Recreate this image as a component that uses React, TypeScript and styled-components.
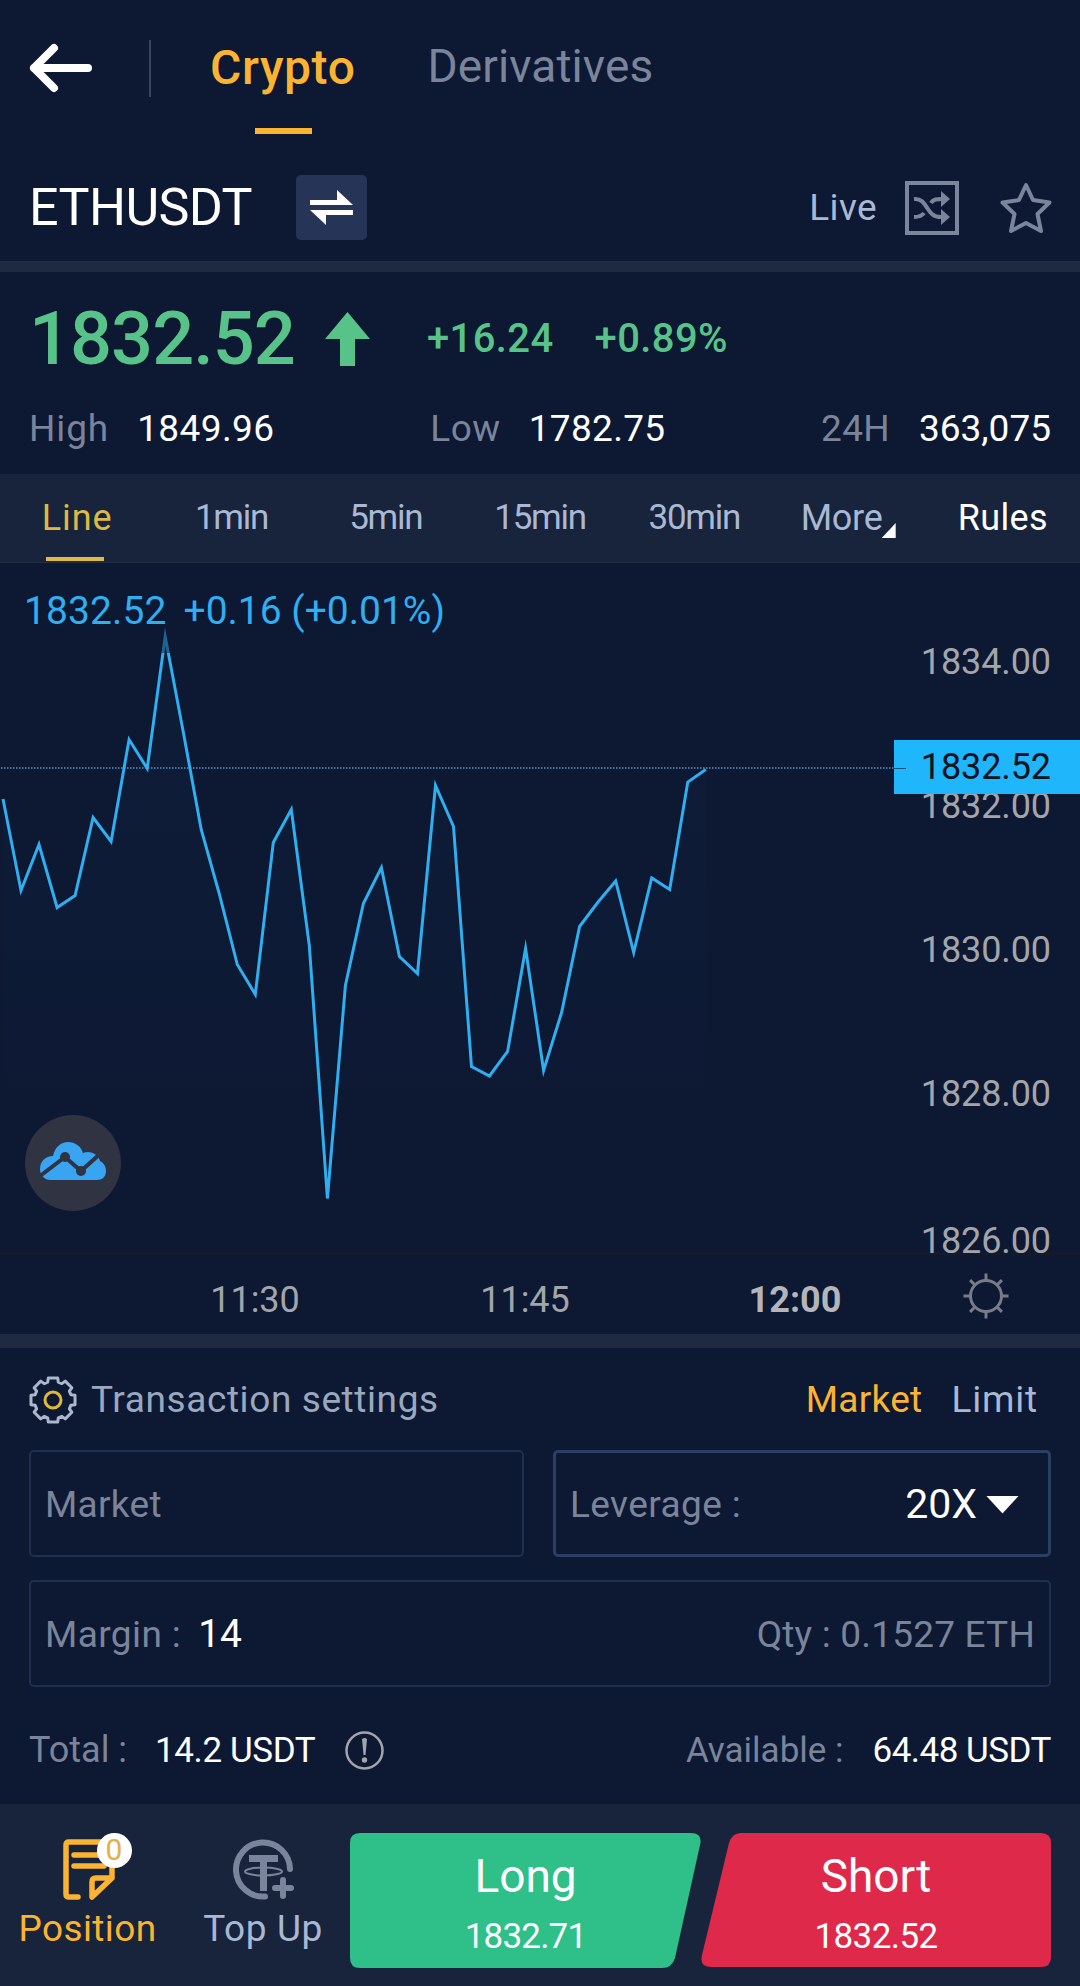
import React from "react";
import styled, { createGlobalStyle } from "styled-components";

const GlobalStyle = createGlobalStyle`
  * { box-sizing: border-box; }
  html, body { margin: 0; padding: 0; background: #0d1832; }
  body { font-family: Roboto, "Liberation Sans", sans-serif; }
`;

const Screen = styled.main`
  width: 1080px;
  height: 1986px;
  display: flex;
  flex-direction: column;
  overflow: hidden;
  background: #0d1832;
  color: #fff;
`;

const Label = styled.span<{ $size?: number; $color?: string; $weight?: number; $spacing?: number }>`
  font-size: ${(p) => p.$size ?? 37}px;
  line-height: 1;
  color: ${(p) => p.$color ?? "#fff"};
  font-weight: ${(p) => p.$weight ?? 400};
  letter-spacing: ${(p) => p.$spacing ?? 0}px;
  white-space: nowrap;
`;

const MUTED = "#7a849b";
const SOFT = "#a9b8d4";
const GOLD = "#fbb332";
const GREEN = "#58c388";

const Band = styled.div<{ $h: number }>`
  flex: none;
  height: ${(p) => p.$h}px;
  background: #1f2940;
`;

const TopNav = styled.header`
  flex: none;
  height: 136px;
  display: flex;
  align-items: center;
  padding-left: 29px;
`;

const NavDivider = styled.div`
  width: 2px;
  height: 57px;
  margin: 0 59px 0 57px;
  background: #3a445a;
`;

const NavTab = styled.div<{ $active?: boolean }>`
  height: 136px;
  position: relative;
  display: flex;
  align-items: center;
  justify-content: center;
  padding-bottom: ${(p) => (p.$active ? 0 : 5)}px;
  margin-right: 72px;
  &::after {
    content: "";
    display: ${(p) => (p.$active ? "block" : "none")};
    position: absolute;
    bottom: 2px;
    left: 50%;
    width: 57px;
    height: 6px;
    margin-left: -28px;
    background: ${GOLD};
  }
`;

const SymbolRow = styled.section`
  flex: none;
  height: 125px;
  padding: 18px 28px 0 29px;
  display: flex;
  align-items: center;
`;

const SwapButton = styled.button`
  width: 71px;
  height: 65px;
  margin-left: 44px;
  padding: 0;
  border: 0;
  border-radius: 5px;
  background: #263557;
  display: flex;
  align-items: center;
  justify-content: center;
`;

const SymbolActions = styled.div`
  margin-left: auto;
  display: flex;
  align-items: center;
`;

const ActionIcon = styled.svg<{ $ml: number }>`
  display: block;
  margin-left: ${(p) => p.$ml}px;
`;

const Quote = styled.section`
  flex: none;
  height: 202px;
`;

const PriceRow = styled.div`
  height: 132px;
  display: flex;
  align-items: center;
  padding: 2px 0 0 29px;
`;

const Change = styled(Label)<{ $ml: number }>`
  margin-left: ${(p) => p.$ml}px;
`;

const StatsRow = styled.div`
  height: 48px;
  padding: 0 29px;
  display: flex;
  align-items: center;
  justify-content: space-between;
`;

const Stat = styled.div<{ $gap: number }>`
  display: flex;
  align-items: center;
  gap: ${(p) => p.$gap}px;
`;

const Tabs = styled.nav`
  flex: none;
  height: 89px;
  display: grid;
  grid-template-columns: repeat(7, 1fr);
  background: #18233c;
  border-bottom: 1px solid #222d45;
`;

const Tab = styled.div<{ $active?: boolean; $marked?: boolean }>`
  position: relative;
  display: flex;
  align-items: center;
  justify-content: center;
  padding: 0 ${(p) => (p.$marked ? 14 : 0)}px 1px 0;
  &::after {
    content: "";
    display: ${(p) => (p.$active ? "block" : "none")};
    position: absolute;
    left: 46px;
    bottom: 1px;
    width: 58px;
    height: 4px;
    background: #dcbc45;
  }
`;

const MoreMark = styled.i`
  position: absolute;
  right: 30px;
  top: 49px;
  width: 14px;
  height: 15px;
  background: #fff;
  clip-path: polygon(100% 0, 100% 100%, 0 100%);
`;

const Chart = styled.section`
  flex: none;
  height: 692px;
  position: relative;
  display: grid;
  grid-template-columns: 894px 186px;
  border-bottom: 3px solid #131a2c;
`;

const Plot = styled.svg`
  display: block;
`;

const Legend = styled.div`
  position: absolute;
  left: 24px;
  top: 29px;
  display: flex;
  gap: 17px;
`;

const PriceAxis = styled.div`
  display: flex;
  flex-direction: column;
  align-items: flex-end;
  gap: 108px;
  padding: 81px 29px 0 0;
  & > :last-child {
    margin-top: 3px;
  }
`;

const PriceTag = styled.div`
  position: absolute;
  right: 0;
  top: 177px;
  width: 186px;
  height: 54px;
  padding-right: 29px;
  background: #1fb6fb;
  display: flex;
  align-items: center;
  justify-content: flex-end;
  &::before {
    content: "";
    position: absolute;
    left: 0;
    top: 28px;
    width: 12px;
    height: 1px;
    background: #0d4f78;
  }
`;

const CloudBadge = styled.div`
  position: absolute;
  left: 25px;
  top: 552px;
  width: 96px;
  height: 96px;
  border-radius: 50%;
  background: #2f3342;
`;

const TimeAxis = styled.div`
  flex: none;
  height: 79px;
  padding: 10px 0 0 120px;
  display: flex;
  align-items: flex-start;
`;

const TimeSlot = styled.div`
  width: 270px;
  height: 70px;
  display: flex;
  align-items: center;
  justify-content: center;
`;

const TimeIcon = styled.svg`
  margin: 6px 0 0 31px;
`;

const Order = styled.section`
  flex: none;
  height: 456px;
  padding: 0 29px;
`;

const OrderHead = styled.div`
  height: 102px;
  padding-top: 1px;
  display: flex;
  align-items: center;
`;

const OrderModes = styled.div`
  margin-left: auto;
  padding-right: 13px;
  display: flex;
  gap: 29px;
`;

const Fields = styled.div`
  display: grid;
  grid-template-columns: 495px 498px;
  gap: 23px 29px;
`;

const Field = styled.div<{ $strong?: boolean; $wide?: boolean }>`
  height: 107px;
  grid-column: ${(p) => (p.$wide ? "1 / -1" : "auto")};
  border: ${(p) => (p.$strong ? "3px solid #2a3f62" : "2px solid #1f2f50")};
  border-radius: 5px;
  padding: 2px ${(p) => (p.$strong ? 29 : 14)}px 0 14px;
  display: flex;
  align-items: center;
`;

const Push = styled.div`
  margin-left: auto;
  display: flex;
  align-items: center;
`;

const Caret = styled.i`
  width: 33px;
  height: 18px;
  margin-left: 9px;
  background: #fff;
  clip-path: polygon(0 0, 100% 0, 50% 100%);
`;

const Totals = styled.div`
  height: 117px;
  padding-top: 9px;
  display: flex;
  align-items: center;
`;

const BottomBar = styled.footer`
  flex: none;
  height: 182px;
  padding: 29px 29px 0 17px;
  display: flex;
  background: #18233c;
`;

const BarItem = styled.div<{ $w: number; $ml?: number }>`
  width: ${(p) => p.$w}px;
  margin-left: ${(p) => p.$ml ?? 0}px;
  height: 135px;
  display: flex;
  flex-direction: column;
  align-items: center;
  gap: 9px;
`;

const BarIcon = styled.div`
  position: relative;
  width: 64px;
  height: 68px;
`;

const Count = styled.span`
  position: absolute;
  left: 41px;
  top: 0;
  width: 35px;
  height: 35px;
  border-radius: 50%;
  background: #fff;
  color: #e3b04a;
  font-size: 30px;
  line-height: 34px;
  text-align: center;
`;

const TradeButtons = styled.div`
  margin-left: auto;
  display: grid;
  grid-template-columns: 351px 350px;
`;

const Trade = styled.button`
  position: relative;
  height: 135px;
  border: 0;
  padding: 20px 0 0;
  background: none;
  font-family: inherit;
  display: flex;
  flex-direction: column;
  align-items: center;
  gap: 20px;
`;

const TradeShape = styled.svg`
  position: absolute;
  inset: 0;
`;

const TradeText = styled(Label)`
  position: relative;
`;

const PRICES = [
  798.5, 890, 844, 907, 895, 817, 841, 739, 768, 636, 731, 829, 893, 964, 994, 842, 809, 945, 1198,
  985, 903, 867, 956, 973, 785, 826, 1066, 1075.5, 1051, 948, 1070, 1012, 926, 902, 880.5, 952,
  877.5, 889, 781.5, 769,
];
const STEP = 18.02;
const points = PRICES.map((y, i) => `${(3 + i * STEP).toFixed(1)},${y - 562.5}`).join(" ");

const gearPath = (() => {
  const out: string[] = [];
  for (let i = 0; i < 8; i++) {
    const c = (i * 45 - 90) * (Math.PI / 180);
    const pts: [number, number][] = [
      [-0.29, 18.6],
      [-0.21, 22.5],
      [0.21, 22.5],
      [0.29, 18.6],
    ];
    pts.forEach(([d, r]) => out.push(`${(24 + r * Math.cos(c + d)).toFixed(2)},${(24 + r * Math.sin(c + d)).toFixed(2)}`));
  }
  return `M${out.join("L")}Z`;
})();

export default function App() {
  return (
    <Screen>
      <GlobalStyle />
      <TopNav>
        <svg width="63" height="50" viewBox="0 0 63 50" fill="none" stroke="#fff" strokeWidth="8" strokeLinecap="round" strokeLinejoin="round">
          <path d="M25 5L5 25L25 45M5 25H59" />
        </svg>
        <NavDivider />
        <NavTab $active>
          <Label $size={48} $color={GOLD} $weight={500} $spacing={0.6}>Crypto</Label>
        </NavTab>
        <NavTab>
          <Label $size={46} $color={MUTED} $spacing={0.1}>Derivatives</Label>
        </NavTab>
      </TopNav>

      <SymbolRow>
        <Label $size={52} $spacing={-0.6}>ETHUSDT</Label>
        <SwapButton>
          <svg width="43" height="36" viewBox="0 0 43 36" fill="#fff">
            <path d="M0 10H27V0L43 15H0ZM43 20H0L16 35V25H43Z" />
          </svg>
        </SwapButton>
        <SymbolActions>
          <Label $color={SOFT} $spacing={0.4}>Live</Label>
          <ActionIcon $ml={28} width="54" height="54" viewBox="0 0 54 54" fill="none" stroke={MUTED}>
            <rect x="2" y="2" width="50" height="50" strokeWidth="4" />
            <path d="M9 18C24 17 20 37 37 36M9 36C14 36 17 35 19 32M26 22C28 18 32 18 37 18" strokeWidth="4" />
            <path d="M36 10L45 18L36 26ZM36 28L45 36L36 44Z" fill={MUTED} stroke="none" />
          </ActionIcon>
          <ActionIcon $ml={41} width="52" height="52" viewBox="0 0 52 52" fill="none" stroke={MUTED} strokeWidth="4" strokeLinejoin="round">
            <path d="M26 3L33 18L49.500 20.500L37.500 32L41 49L26 41L11 49L14.500 32L2.500 20.500L19 18Z" />
          </ActionIcon>
        </SymbolActions>
      </SymbolRow>
      <Band $h={11} />

      <Quote>
        <PriceRow>
          <Label $size={74} $color={GREEN} $weight={500} $spacing={-1}>1832.52</Label>
          <ActionIcon $ml={30} width="45" height="54" viewBox="0 0 45 54" fill={GREEN}>
            <path d="M22.500 0L45 27H30V54H15V27H0Z" />
          </ActionIcon>
          <Change $ml={57} $size={40} $color={GREEN} $weight={500} $spacing={0.4}>+16.24</Change>
          <Change $ml={41} $size={40} $color={GREEN} $weight={500} $spacing={0.4}>+0.89%</Change>
        </PriceRow>
        <StatsRow>
          <Stat $gap={28}><Label $color={MUTED} $spacing={0.9}>High</Label><Label $spacing={0.4}>1849.96</Label></Stat>
          <Stat $gap={28}><Label $color={MUTED} $spacing={0.6}>Low</Label><Label $spacing={0.3}>1782.75</Label></Stat>
          <Stat $gap={29}><Label $color={MUTED} $spacing={0.3}>24H</Label><Label>363,075</Label></Stat>
        </StatsRow>
      </Quote>

      <Tabs>
        <Tab $active><Label $size={36} $color="#dcb945" $spacing={0.9}>Line</Label></Tab>
        {["1min", "5min", "15min", "30min"].map((t) => (
          <Tab key={t}><Label $size={35} $color={SOFT} $spacing={-1.3}>{t}</Label></Tab>
        ))}
        <Tab $marked><Label $size={36} $color={SOFT} $spacing={-0.3}>More</Label><MoreMark /></Tab>
        <Tab><Label $size={36} $spacing={0.4}>Rules</Label></Tab>
      </Tabs>

      <Chart>
        <Plot width="894" height="690" viewBox="0 0 894 690">
          <defs>
            <linearGradient id="area" x1="0" y1="0" x2="0" y2="1">
              <stop offset="0" stopColor="#1fb6fb" stopOpacity="0.03" />
              <stop offset="1" stopColor="#1fb6fb" stopOpacity="0" />
            </linearGradient>
          </defs>
          <polygon points={`3,690 ${points} 706,690`} fill="url(#area)" />
          <line x1="1" y1="205" x2="894" y2="205" stroke="#4f93c8" strokeWidth="1.500" strokeDasharray="1.500 1.500" />
          <polyline points={points} fill="none" stroke="#2faef0" strokeWidth="3" strokeMiterlimit="10" />
          <rect x="158" y="62" width="14" height="28" fill="#0d1832" fillOpacity="0.5" />
        </Plot>
        <PriceAxis>
          {["1834.00", "1832.00", "1830.00", "1828.00", "1826.00"].map((p) => (
            <Label key={p} $size={36} $color="#a3a5ab" $spacing={-0.1}>{p}</Label>
          ))}
        </PriceAxis>
        <Legend>
          <Label $size={39} $color="#2faef0" $spacing={0.1}>1832.52</Label>
          <Label $size={39} $color="#2faef0">+0.16 (+0.01%)</Label>
        </Legend>
        <PriceTag><Label $size={36} $color="#0b1420" $spacing={-0.1}>1832.52</Label></PriceTag>
        <CloudBadge>
          <svg width="96" height="96" viewBox="0 0 96 96">
            <path d="M26 65C19 65 15 60 15 54C15 46 21 41 28 41C30 32 36 27 43 27C50 27 56 31 58 38C65 35 73 39 75 46C79 48 81 52 81 56C81 62 77 65 72 65Z" fill="#38a4f2" />
            <path d="M15 61L40 42L56 56L76 38" fill="none" stroke="#2f3342" strokeWidth="4" />
            <circle cx="40" cy="42" r="5" fill="#2f3342" />
            <circle cx="56" cy="56" r="5" fill="#2f3342" />
          </svg>
        </CloudBadge>
      </Chart>
      <TimeAxis>
        <TimeSlot><Label $size={36} $color="#a3a5ab">11:30</Label></TimeSlot>
        <TimeSlot><Label $size={36} $color="#a3a5ab">11:45</Label></TimeSlot>
        <TimeSlot><Label $size={36} $color="#b4b5ba" $weight={700}>12:00</Label></TimeSlot>
        <TimeIcon width="50" height="50" viewBox="-25 -25 50 50" fill="none" stroke="#777c88" strokeWidth="3">
          <circle r="15.500" />
          {[0, 45, 90, 135, 180, 225, 270, 315].map((a) => (
            <path key={a} d="M0 -16V-22.500" transform={`rotate(${a})`} />
          ))}
        </TimeIcon>
      </TimeAxis>
      <Band $h={14} />

      <Order>
        <OrderHead>
          <svg width="48" height="48" viewBox="0 0 48 48" fill="none" strokeWidth="3" strokeLinejoin="round">
            <path d={gearPath} stroke="#a9b8cc" />
            <circle cx="24" cy="24" r="8" stroke="#dcb93c" />
          </svg>
          <Change $ml={14} $color="#9aa8bf" $spacing={0.6}>Transaction settings</Change>
          <OrderModes>
            <Label $color={GOLD} $spacing={0.3}>Market</Label>
            <Label $color={SOFT} $spacing={0.8}>Limit</Label>
          </OrderModes>
        </OrderHead>
        <Fields>
          <Field><Label $color={MUTED} $spacing={0.3}>Market</Label></Field>
          <Field $strong>
            <Label $color={MUTED} $spacing={0.4}>Leverage :</Label>
            <Push><Label $size={41}>20X</Label><Caret /></Push>
          </Field>
          <Field $wide>
            <Label $color={MUTED} $spacing={0.4}>Margin :</Label>
            <Change $ml={17} $size={39}>14</Change>
            <Push><Label $color={MUTED} $spacing={0.2}>Qty : 0.1527 ETH</Label></Push>
          </Field>
        </Fields>
        <Totals>
          <Label $size={36} $color={MUTED}>Total :</Label>
          <Change $ml={28} $size={35} $spacing={-0.4}>14.2 USDT</Change>
          <ActionIcon $ml={30} width="39" height="39" viewBox="0 0 39 39">
            <circle cx="19.500" cy="19.500" r="18" fill="none" stroke="#a3a5ab" strokeWidth="2.500" />
            <path d="M17 8Q19.500 6 22 8L20.500 24H18.500Z" fill="#a3a5ab" />
            <circle cx="19.500" cy="29" r="2.700" fill="#a3a5ab" />
          </ActionIcon>
          <Push>
            <Label $size={35} $color={MUTED}>Available :</Label>
            <Change $ml={29} $size={35} $spacing={-0.5}>64.48 USDT</Change>
          </Push>
        </Totals>
      </Order>

      <BottomBar>
        <BarItem $w={141}>
          <BarIcon>
            <svg width="64" height="68" viewBox="0 0 64 68" fill="none" stroke={GOLD} strokeWidth="5.500" strokeLinejoin="round" strokeLinecap="round">
              <path d="M22 64H13Q10 64 10 61V12Q10 9 13 9H53Q56 9 56 12V45L36 64V49Q36 45 40 45H56" />
              <path d="M18 22H46M18 33H48" />
            </svg>
            <Count>0</Count>
          </BarIcon>
          <Label $color={GOLD} $spacing={0.4}>Position</Label>
        </BarItem>
        <BarItem $w={130} $ml={40}>
          <BarIcon>
            <svg width="64" height="68" viewBox="0 0 64 68" fill="none" stroke={MUTED} strokeLinecap="round">
              <path d="M59 36A27 27 0 1 0 34 63.500" strokeWidth="6" />
              <path d="M18 22H47V29H36V58H29V29H18Z" fill={MUTED} stroke="none" />
              <ellipse cx="32.500" cy="38.500" rx="18.500" ry="4" strokeWidth="2" />
              <path d="M52 47V63M44 55H60" strokeWidth="6" />
            </svg>
          </BarIcon>
          <Label $color={SOFT} $spacing={0.6}>Top Up</Label>
        </BarItem>
        <TradeButtons>
          <Trade>
            <TradeShape width="351" height="135" viewBox="0 0 351 135">
              <path d="M10 0H341Q353 0 350 12L325 125Q322 135 312 135H10Q0 135 0 125V10Q0 0 10 0Z" fill="#2fbf88" />
            </TradeShape>
            <TradeText $size={46}>Long</TradeText>
            <TradeText $size={35} $spacing={-0.8}>1832.71</TradeText>
          </Trade>
          <Trade>
            <TradeShape width="350" height="135" viewBox="0 0 350 135">
              <path d="M40 0H340Q350 0 350 10V124Q350 134 340 134H10Q-2 134 1 122L28 10Q31 0 40 0Z" fill="#df294a" />
            </TradeShape>
            <TradeText $size={46}>Short</TradeText>
            <TradeText $size={35} $spacing={-0.6}>1832.52</TradeText>
          </Trade>
        </TradeButtons>
      </BottomBar>
    </Screen>
  );
}
